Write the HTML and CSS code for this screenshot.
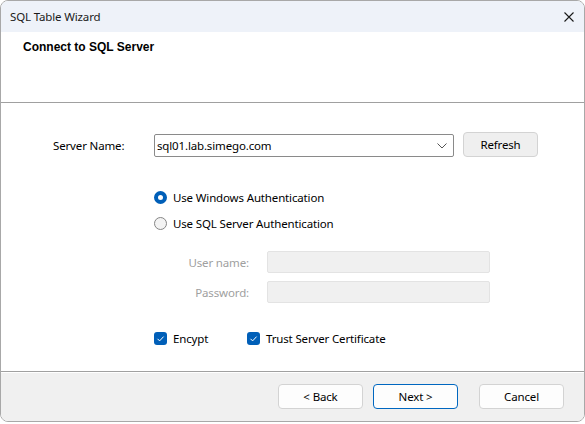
FILE: index.html
```html
<!DOCTYPE html>
<html>
<head>
<meta charset="utf-8">
<link rel="stylesheet" href="styles.css">
</head>
<body>
<div class="window">
  <div class="titlebar">
    <span class="title">SQL Table Wizard</span>
    <svg class="close" width="10" height="10" viewBox="0 0 10 10"><path d="M0.5 0.5L9.5 9.5M9.5 0.5L0.5 9.5" stroke="#1a1a1a" stroke-width="1.1" fill="none"/></svg>
  </div>
  <div class="header">
    <div class="heading">Connect to SQL Server</div>
  </div>
  <div class="content">
    <div class="server-row">
      <label class="server-label">Server Name:</label>
      <div class="combo">
        <span class="combo-text">sql01.lab.simego.com</span>
        <svg class="chevron" width="10" height="6" viewBox="0 0 10 6"><path d="M0.5 0.5L5 5L9.5 0.5" stroke="#555" stroke-width="1" fill="none"/></svg>
      </div>
      <button class="btn refresh">Refresh</button>
    </div>
    <div class="radios">
      <div class="radio-row"><span class="radio checked"></span><span>Use Windows Authentication</span></div>
      <div class="radio-row"><span class="radio"></span><span>Use SQL Server Authentication</span></div>
    </div>
    <div class="creds">
      <span class="cred-label">User name:</span><span class="field"></span>
      <span class="cred-label">Password:</span><span class="field"></span>
    </div>
    <div class="checks">
      <div class="check-row encrypt"><span class="checkbox"><svg width="13" height="13" viewBox="0 0 13 13"><path d="M3.5 6.8L5.6 8.9L9.6 4.6" stroke="#fff" stroke-width="1" fill="none"/></svg></span><span>Encypt</span></div>
      <div class="check-row"><span class="checkbox"><svg width="13" height="13" viewBox="0 0 13 13"><path d="M3.5 6.8L5.6 8.9L9.6 4.6" stroke="#fff" stroke-width="1" fill="none"/></svg></span><span>Trust Server Certificate</span></div>
    </div>
  </div>
  <div class="footer">
    <button class="btn">&lt; Back</button>
    <button class="btn default">Next &gt;</button>
    <button class="btn cancel">Cancel</button>
  </div>
</div>
</body>
</html>
```

FILE: styles.css
```css
html, body {
  margin: 0;
  padding: 0;
  background: #ffffff;
}
body {
  width: 585px;
  height: 424px;
  overflow: hidden;
  font-family: "Noto Sans", "Open Sans", sans-serif;
  font-size: 11.5px;
  letter-spacing: -0.15px;
  color: #000;
}
.window {
  width: 585px;
  height: 422px;
  box-sizing: border-box;
  border: 1px solid #a8a8a8;
  border-radius: 8px;
  overflow: hidden;
  display: flex;
  flex-direction: column;
  background: #fff;
}
.titlebar {
  height: 31px;
  background: #eef2f9;
  display: flex;
  align-items: center;
  justify-content: space-between;
  padding: 0 10px 0 9px;
  flex: none;
}
.title {
  color: #1a1a1a;
}
.header {
  background: #fff;
  border-bottom: 1px solid #a0a0a0;
  flex: none;
  box-sizing: border-box;
  height: 71px;
}
.heading {
  font-family: "Liberation Sans", Arial, sans-serif;
  font-weight: bold;
  font-size: 12px;
  letter-spacing: 0;
  padding: 8px 0 0 22px;
}
.content {
  height: 269px;
  flex: none;
  background: #fff;
  border-bottom: 1px solid #a0a0a0;
  box-sizing: border-box;
  padding: 29px 0 0 52px;
}
.server-row {
  display: flex;
  align-items: flex-start;
  height: 25px;
}
.server-label {
  width: 101px;
  line-height: 25px;
  padding-top: 1px;
}
.combo {
  width: 300px;
  height: 23px;
  margin-top: 2px;
  box-sizing: border-box;
  border: 1px solid #8a8a8a;
  border-radius: 2px;
  display: flex;
  align-items: center;
  justify-content: space-between;
  padding: 0 6px 0 2px;
}
.btn {
  font-family: "Noto Sans", "Open Sans", sans-serif;
  font-size: 11.5px;
  letter-spacing: -0.15px;
  color: #000;
  width: 85px;
  height: 25px;
  box-sizing: border-box;
  border: 1px solid #d3d3d3;
  border-radius: 4px;
  background: #fdfdfd;
  padding: 0;
}
.refresh {
  width: 75px;
  height: 25px;
  margin-left: 9px;
  background: #efefef;
}
.radios {
  margin: 27px 0 0 101px;
  display: flex;
  flex-direction: column;
}
.radio-row {
  display: flex;
  align-items: center;
  height: 26px;
  gap: 6px;
}
.radio {
  width: 13px;
  height: 13px;
  box-sizing: border-box;
  border-radius: 50%;
  border: 1px solid #858585;
  background: #f3f3f3;
}
.radio.checked {
  border: 4px solid #005fb8;
  background: #fff;
}
.creds {
  display: grid;
  grid-template-columns: 95px 223px;
  column-gap: 18px;
  row-gap: 8px;
  margin: 15px 0 0 101px;
  align-items: center;
}
.cred-label {
  color: #a0a0a0;
  text-align: right;
}
.field {
  height: 22px;
  box-sizing: border-box;
  background: #f0f0f0;
  border: 1px solid #e3e3e3;
  border-radius: 2px;
}
.checks {
  display: flex;
  margin: 28px 0 0 101px;
}
.check-row {
  display: flex;
  align-items: center;
  gap: 6px;
  height: 14px;
}
.check-row.encrypt {
  width: 93px;
}
.checkbox {
  width: 13px;
  height: 13px;
  border-radius: 3px;
  background: #005fb8;
  display: block;
}
.checkbox svg {
  display: block;
}
.footer {
  flex: 1;
  background: #f0f0f0;
  border-top: 1px solid #fff;
  display: flex;
  justify-content: flex-end;
  align-items: flex-start;
  padding: 11px 20px 0 0;
  box-sizing: border-box;
}
.footer .btn + .btn {
  margin-left: 10px;
}
.footer .btn.cancel {
  margin-left: 21px;
}
.btn.default {
  border-color: #0067c0;
}
```
